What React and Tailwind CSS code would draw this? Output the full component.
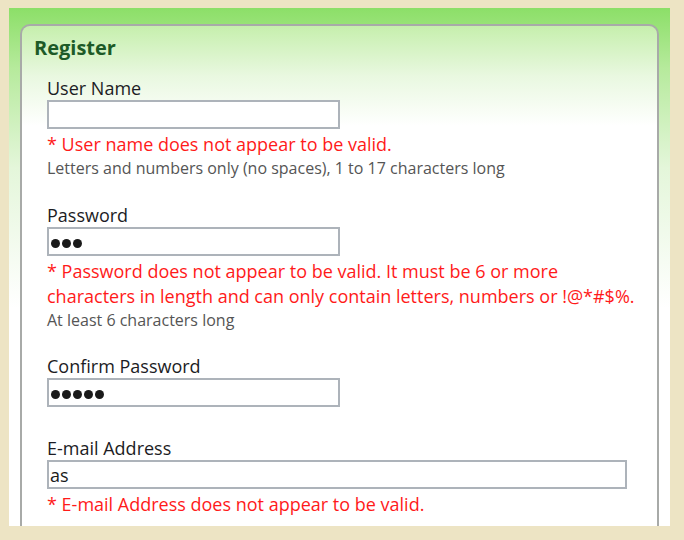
const font = { fontFamily: '"Open Sans", "Noto Sans", sans-serif' };

function Dots({ n }) {
  return (
    <div className="flex items-center gap-[2px] pt-[3px] pl-[1px]">
      {Array.from({ length: n }).map((_, i) => (
        <span key={i} className="block w-[9px] h-[9px] rounded-full bg-[#1a1a1a]" />
      ))}
    </div>
  );
}

function Field({ label, children, wide, className = "" }) {
  return (
    <div className={className}>
      <div className="text-[18px] leading-[24px] text-[#1c1c24]">{label}</div>
      <div
        className={`h-[29px] border-2 border-[#adb3ba] bg-white flex items-center px-[1px] ${
          wide ? "w-[580px]" : "w-[293px]"
        }`}
      >
        {children}
      </div>
    </div>
  );
}

function Error({ children }) {
  return <div className="text-[18px] leading-[25px] text-[#ff1a1a] mt-[3px]">{children}</div>;
}

function Hint({ children }) {
  return <div className="text-[16px] leading-[22px] text-[#555555]">{children}</div>;
}

export default function App() {
  return (
    <div className="min-h-[540px] bg-[#ede4c4] pt-[8px] pl-[9px] pr-[14px] pb-[14px] flex" style={font}>
      <div className="flex-1 flex flex-col pt-[16px] px-[11px] bg-[linear-gradient(to_bottom,#8cdf68_0px,#b6ea9c_60px,#e4f6da_160px,#ffffff_300px)]">
        <div className="flex-1 border-2 border-b-0 border-[#a8aaa8] rounded-t-[10px] bg-[linear-gradient(to_bottom,#c6efad_0px,#e9f8e0_50px,#ffffff_100px)] pt-[9px] pl-[12px]">
          <h1 className="text-[20px] leading-[26px] font-bold text-[#1d5a27]">Register</h1>

          <div className="pl-[13px] pt-[15px]">
            <Field label="User Name" />
            <Error>* User name does not appear to be valid.</Error>
            <Hint>Letters and numbers only (no spaces), 1 to 17 characters long</Hint>

            <Field label="Password" className="mt-[24px]">
              <Dots n={3} />
            </Field>
            <Error>
              * Password does not appear to be valid. It must be 6 or more
              <br />
              characters in length and can only contain letters, numbers or !@*#$%.
            </Error>
            <Hint>At least 6 characters long</Hint>

            <Field label="Confirm Password" className="mt-[23px]">
              <Dots n={5} />
            </Field>

            <Field label="E-mail Address" wide className="mt-[29px]">
              <span className="text-[18px] leading-none text-[#1a1a1a]">as</span>
            </Field>
            <Error>* E-mail Address does not appear to be valid.</Error>
          </div>
        </div>
      </div>
    </div>
  );
}
